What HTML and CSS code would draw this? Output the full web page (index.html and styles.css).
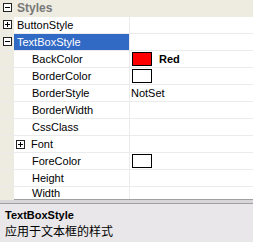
FILE: index.html
```html
<!DOCTYPE html>
<html>
<head>
<meta charset="utf-8">
<link rel="stylesheet" href="styles.css">
</head>
<body>
<div class="pg">
  <div class="grid">
    <div class="row cat">
      <div class="gut"><span class="box minus"></span></div>
      <div class="catname">Styles</div>
    </div>
    <div class="row">
      <div class="gut"><span class="box plus"></span></div>
      <div class="name sub">ButtonStyle</div>
      <div class="val"></div>
    </div>
    <div class="row">
      <div class="gut"><span class="box minus"></span></div>
      <div class="name sub sel">TextBoxStyle</div>
      <div class="val"></div>
    </div>
    <div class="row">
      <div class="gut"></div>
      <div class="name">BackColor</div>
      <div class="val"><span class="sw red"></span><b>Red</b></div>
    </div>
    <div class="row">
      <div class="gut"></div>
      <div class="name">BorderColor</div>
      <div class="val"><span class="sw"></span></div>
    </div>
    <div class="row">
      <div class="gut"></div>
      <div class="name">BorderStyle</div>
      <div class="val">NotSet</div>
    </div>
    <div class="row">
      <div class="gut"></div>
      <div class="name">BorderWidth</div>
      <div class="val"></div>
    </div>
    <div class="row">
      <div class="gut"></div>
      <div class="name">CssClass</div>
      <div class="val"></div>
    </div>
    <div class="row">
      <div class="gut"></div>
      <div class="name exp"><span class="box plus"></span>Font</div>
      <div class="val"></div>
    </div>
    <div class="row">
      <div class="gut"></div>
      <div class="name">ForeColor</div>
      <div class="val"><span class="sw"></span></div>
    </div>
    <div class="row">
      <div class="gut"></div>
      <div class="name">Height</div>
      <div class="val"></div>
    </div>
    <div class="row last">
      <div class="gut"></div>
      <div class="name">Width</div>
      <div class="val"></div>
    </div>
  </div>
  <div class="split"></div>
  <div class="desc">
    <div class="dtitle">TextBoxStyle</div>
    <div class="dtext">应用于文本框的样式</div>
  </div>
</div>
</body>
</html>
```
FILE: styles.css
```css
html, body {
  margin: 0;
  padding: 0;
  background: #ffffff;
  overflow: hidden;
}
.pg {
  width: 253px;
  height: 242px;
  display: flex;
  flex-direction: column;
  font-family: "Liberation Sans", Arial, sans-serif;
  font-size: 11px;
  color: #000;
}
.grid {
  display: flex;
  flex-direction: column;
  height: 199px;
  flex: none;
}
.row {
  display: flex;
  height: 16px;
  flex: none;
  border-bottom: 1px solid #ebebeb;
  line-height: 16px;
}
.row.cat {
  background: #eeece1;
  border-bottom: 1px solid #eeece1;
}
.row.last {
  height: 13px;
  line-height: 13px;
  border-bottom: none;
}
.gut {
  width: 14px;
  flex: none;
  background: #eeece1;
  position: relative;
}
.box {
  display: inline-block;
  width: 7px;
  height: 7px;
  border: 1px solid #222;
  background: #fff;
  position: relative;
  box-sizing: content-box;
}
.gut .box {
  position: absolute;
  left: 3px;
  top: 3px;
}
.box::before {
  content: "";
  position: absolute;
  left: 1px;
  top: 3px;
  width: 5px;
  height: 1px;
  background: #000;
}
.box.plus::after {
  content: "";
  position: absolute;
  left: 3px;
  top: 1px;
  width: 1px;
  height: 5px;
  background: #000;
}
.catname {
  padding-left: 3px;
  font-weight: bold;
  color: #777;
  font-size: 12px;
}
.name {
  width: 116px;
  flex: none;
  padding-left: 18px;
  box-sizing: border-box;
  border-right: 1px solid #ebebeb;
  white-space: nowrap;
}
.name.sub {
  padding-left: 3px;
}
.name.sel {
  background: #316ac5;
  color: #fff;
}
.name.exp {
  padding-left: 2px;
  display: flex;
  align-items: center;
}
.name.exp .box {
  margin-right: 6px;
}
.val {
  flex: 1;
  padding-left: 1px;
  display: flex;
  align-items: center;
  white-space: nowrap;
}
.sw {
  width: 18px;
  height: 12px;
  border: 1px solid #000;
  background: #fff;
  margin-right: 7px;
  margin-left: 1px;
  flex: none;
}
.sw.red {
  background: #ff0000;
}
.val b {
  font-weight: bold;
}
.split {
  height: 5px;
  flex: none;
  border-top: 1px solid #a0a0a0;
  border-bottom: 1px solid #a0a0a0;
  background: #d8d6d8;
  box-sizing: border-box;
}
.desc {
  flex: 1;
  background: #e9e7e9;
  padding: 3px 5px;
}
.dtitle {
  font-weight: bold;
  line-height: 16px;
  font-size: 11px;
}
.dtext {
  font-family: "Noto Sans CJK SC", sans-serif;
  font-size: 12px;
  line-height: 16px;
}
```
